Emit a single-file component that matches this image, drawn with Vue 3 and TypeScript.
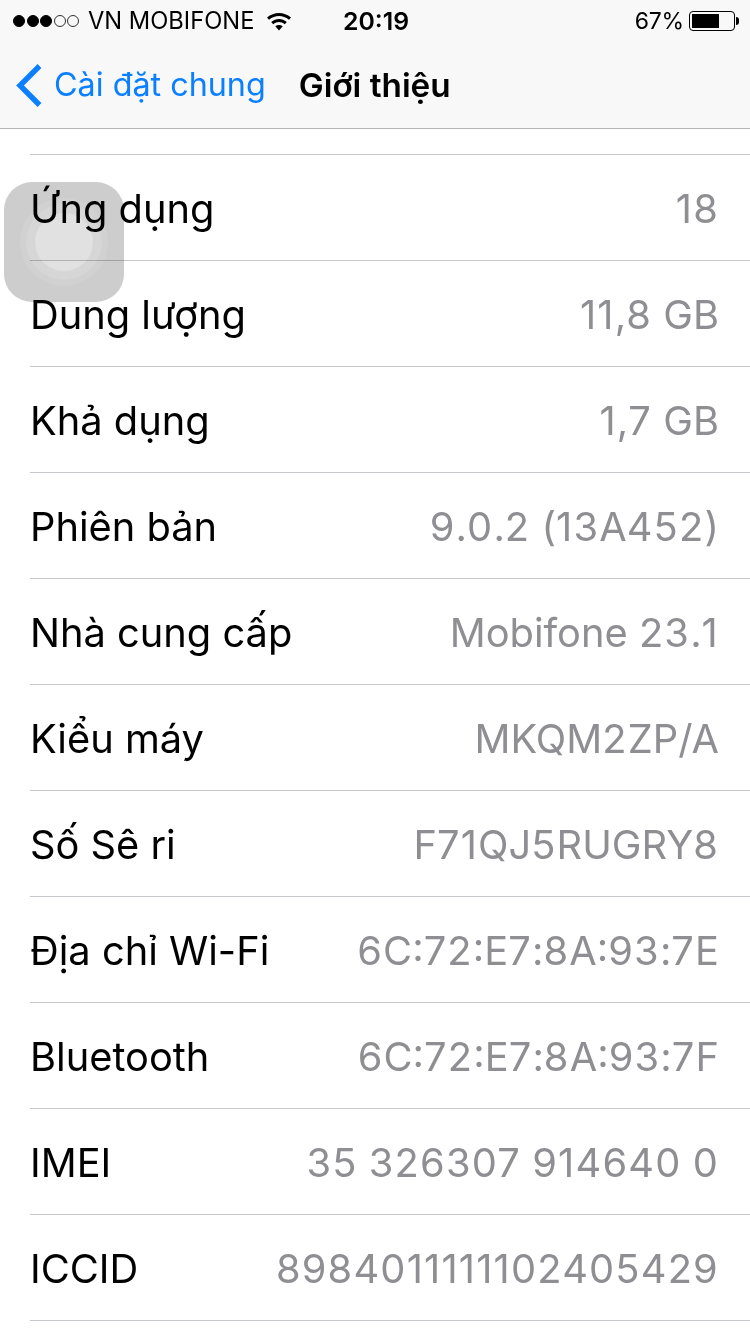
<script setup lang="ts">
interface InfoRow {
  label: string
  value: string
}

const rows: InfoRow[] = [
  { label: 'Ứng dụng', value: '18' },
  { label: 'Dung lượng', value: '11,8 GB' },
  { label: 'Khả dụng', value: '1,7 GB' },
  { label: 'Phiên bản', value: '9.0.2 (13A452)' },
  { label: 'Nhà cung cấp', value: 'Mobifone 23.1' },
  { label: 'Kiểu máy', value: 'MKQM2ZP/A' },
  { label: 'Số Sê ri', value: 'F71QJ5RUGRY8' },
  { label: 'Địa chỉ Wi-Fi', value: '6C:72:E7:8A:93:7E' },
  { label: 'Bluetooth', value: '6C:72:E7:8A:93:7F' },
  { label: 'IMEI', value: '35 326307 914640 0' },
  { label: 'ICCID', value: '8984011111102405429' },
]

const signal = [true, true, true, false, false]

// digits run a bit wider than the letters
const splitDigits = (value: string) => value.split(/(\d+)/).filter(Boolean)
const isDigits = (part: string) => /^\d+$/.test(part)
</script>

<template>
  <div class="screen">
    <header class="top">
      <div class="status">
        <div class="status-left">
          <span v-for="(on, i) in signal" :key="i" class="dot" :class="{ on }"></span>
          <span class="carrier">VN MOBIFONE</span>
          <svg class="wifi" width="26" height="20" viewBox="0 0 26 20">
            <path d="M1 6.5C8 .5 18 .5 25 6.5L23 8.8C17 3.8 9 3.8 3 8.8Z" fill="#000" />
            <path d="M5.2 11C10 7 16 7 20.8 11L18.8 13.2C15 10.3 11 10.3 7.2 13.2Z" fill="#000" />
            <path d="M9.3 15.3C11.5 13.7 14.5 13.7 16.7 15.3L13 19.4Z" fill="#000" />
          </svg>
        </div>
        <span class="time">20:19</span>
        <div class="status-right">
          <span class="percent">67%</span>
          <span class="battery"><span class="level"></span></span>
          <span class="nub"></span>
        </div>
      </div>
      <nav class="nav">
        <svg class="chevron" width="28" height="44" viewBox="0 0 28 44">
          <path d="M24.5 3 5 22.5l19.5 19.5" fill="none" stroke="#0a7fff" stroke-width="5.4" />
        </svg>
        <span class="back">Cài đặt chung</span>
        <span class="title">Giới thiệu</span>
      </nav>
    </header>

    <main class="list">
      <div v-for="row in rows" :key="row.label" class="row">
        <span class="label">{{ row.label }}</span>
        <span class="value"><span
          v-for="(part, i) in splitDigits(row.value)"
          :key="i"
          :class="{ digits: isDigits(part) }"
        >{{ part }}</span></span>
      </div>
    </main>

    <div class="touch">
      <span class="ring outer"><span class="ring middle"><span class="ring inner"></span></span></span>
    </div>
  </div>
</template>

<style scoped>
.screen {
  position: relative;
  width: 750px;
  height: 1334px;
  overflow: hidden;
  background: #fff;
  font-family: Inter, "Liberation Sans", sans-serif;
  color: #000;
}

.top {
  height: 128px;
  background: #f8f8f8;
  border-bottom: 1px solid #b4b4b4;
}

.status {
  height: 41px;
  display: grid;
  grid-template-columns: 1fr auto 1fr;
  align-items: center;
  padding: 0 11px 0 13px;
}

.status-left,
.status-right {
  display: flex;
  align-items: center;
}

.status-right {
  justify-content: flex-end;
}

.dot {
  width: 12px;
  height: 12px;
  margin-right: 1.6px;
  border-radius: 50%;
  border: 1px solid #333;
  box-sizing: border-box;
}

.dot.on {
  background: #000;
  border-color: #000;
}

.carrier {
  margin-left: 7px;
  font-size: 23.7px;
}

.wifi {
  margin-left: 12px;
}

.time {
  font-size: 24.8px;
  font-weight: 600;
}

.percent {
  font-size: 23px;
  letter-spacing: -0.2px;
  margin-right: -1px;
}

.battery {
  width: 46px;
  height: 20px;
  margin-left: 6px;
  padding: 2px;
  box-sizing: border-box;
  border: 1px solid #000;
  border-radius: 4px;
}

.level {
  display: block;
  width: 27px;
  height: 100%;
  background: #000;
}

.nub {
  width: 3px;
  height: 8px;
  margin-left: 1px;
  background: #000;
  border-radius: 0 3px 3px 0;
}

.nav {
  height: 87px;
  display: flex;
  align-items: center;
  padding: 0 0 0 15px;
}

.chevron {
  flex: none;
}

.back {
  margin-left: 11px;
  font-size: 32.3px;
  color: #0a7fff;
}

.title {
  margin-left: 33px;
  font-size: 33.3px;
  font-weight: 600;
}

.list {
  margin: 25px 0 0 30px;
  border-top: 1px solid #c8c7cc;
}

.row {
  height: 105px;
  box-sizing: content-box;
  display: flex;
  align-items: center;
  justify-content: space-between;
  padding-right: 31px;
  border-bottom: 1px solid #c8c7cc;
  font-size: 39.8px;
}

.label,
.value {
  position: relative;
  top: 1px;
}

.value {
  color: #8e8e93;
}

.digits {
  letter-spacing: 1.2px;
}

.touch {
  position: absolute;
  left: 4px;
  top: 182px;
  width: 120px;
  height: 120px;
  display: flex;
  align-items: center;
  justify-content: center;
  border-radius: 28px;
  background: #cdcdcd;
  mix-blend-mode: multiply;
}

.ring {
  display: flex;
  align-items: center;
  justify-content: center;
  border-radius: 50%;
}

.outer {
  width: 88px;
  height: 88px;
  background: #d1d1d1;
}

.middle {
  width: 76px;
  height: 76px;
  background: #d6d6d6;
}

.inner {
  width: 58px;
  height: 58px;
  background: #e1e1e1;
}
</style>
